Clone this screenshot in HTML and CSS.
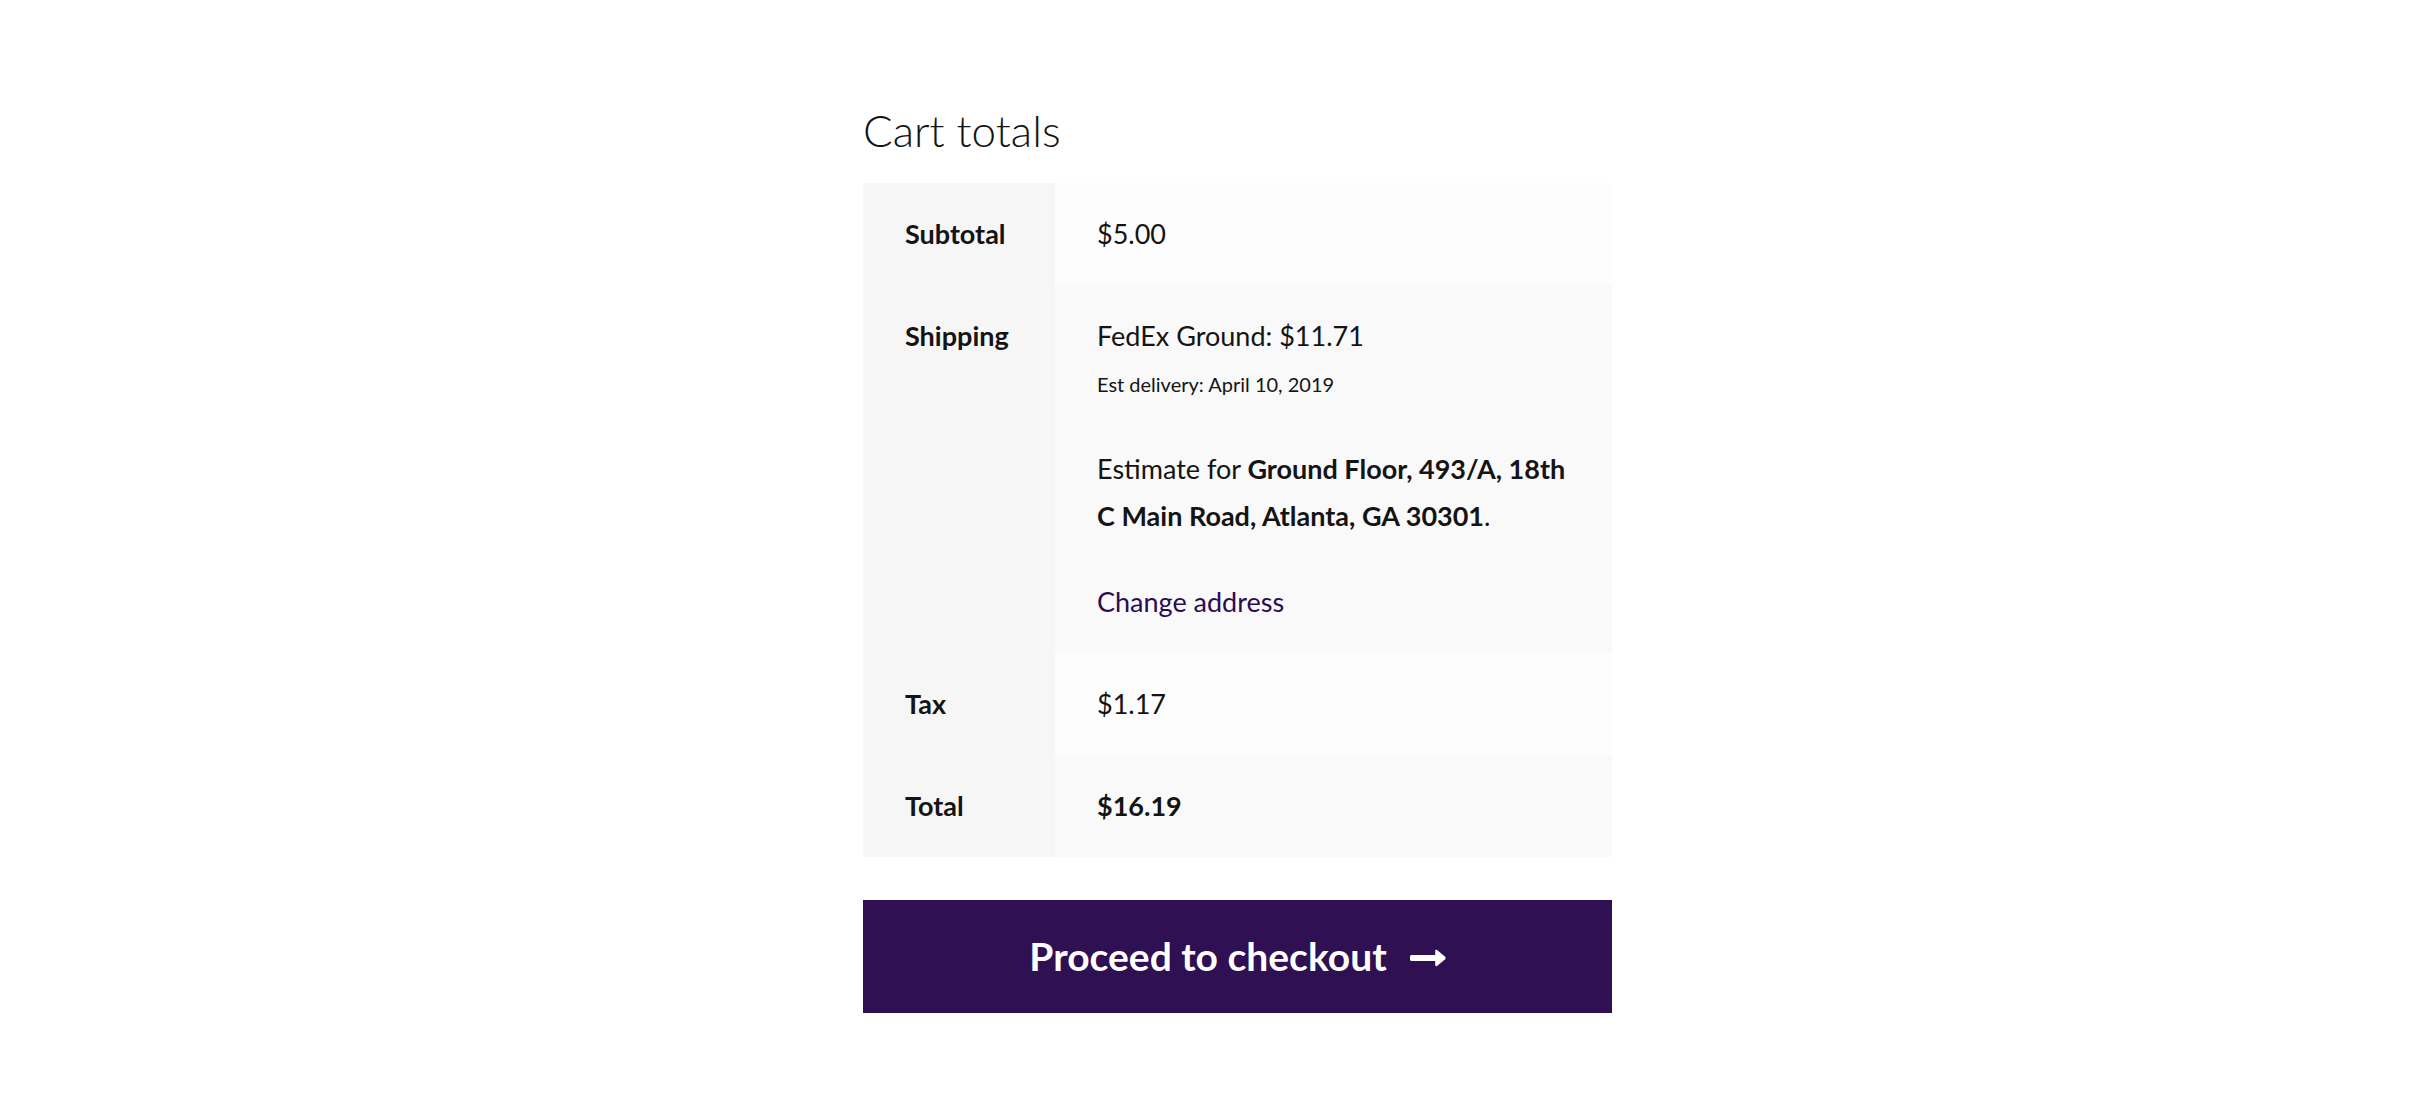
FILE: index.html
```html
<!DOCTYPE html>
<html lang="en">
<head>
<meta charset="utf-8">
<title>Cart totals</title>
<link rel="stylesheet" href="styles.css">
</head>
<body>
<div class="cart-collaterals">
  <div class="cart-totals">
    <h2 class="cart-title">Cart totals</h2>
    <table class="totals-table">
      <tbody>
        <tr class="row">
          <th>Subtotal</th>
          <td>$5.00</td>
        </tr>
        <tr class="row row-alt">
          <th>Shipping</th>
          <td>
            <div class="method">FedEx Ground: $11.71</div>
            <div class="delivery">Est delivery: April 10, 2019</div>
            <p class="destination">Estimate for <strong>Ground Floor, 493/A, 18th C Main Road, Atlanta, GA 30301</strong>.</p>
            <a class="change-address" href="#">Change address</a>
          </td>
        </tr>
        <tr class="row">
          <th>Tax</th>
          <td>$1.17</td>
        </tr>
        <tr class="row row-alt">
          <th>Total</th>
          <td><strong>$16.19</strong></td>
        </tr>
      </tbody>
    </table>
    <a class="checkout-button" href="#">
      <span class="checkout-label">Proceed to checkout</span>
      <svg class="checkout-arrow" width="36" height="18" viewBox="0 0 35 17" aria-hidden="true">
        <path d="M1.5 5.6 H24.5 V1.6 C24.5 0.6 25.5 0.2 26.3 0.8 L34.2 7.4 C34.8 7.9 34.8 9.1 34.2 9.6 L26.3 16.2 C25.5 16.8 24.5 16.4 24.5 15.4 V11.4 H1.5 C0.7 11.4 0 10.7 0 9.9 V7.1 C0 6.3 0.7 5.6 1.5 5.6 Z" fill="#ffffff"/>
      </svg>
    </a>
  </div>
</div>
</body>
</html>
```

FILE: styles.css
```css
html, body {
  margin: 0;
  padding: 0;
  background: #ffffff;
}

body {
  font-family: "Lato", "Noto Sans", "Liberation Sans", sans-serif;
  color: #141414;
  font-size: 27px;
  line-height: 47px;
}

.cart-collaterals {
  display: flex;
  justify-content: flex-start;
  padding: 104px 0 0 863px;
}

.cart-totals {
  width: 749px;
  display: flex;
  flex-direction: column;
}

.cart-title {
  margin: 0 0 27px 0;
  font-size: 44px;
  font-weight: 300;
  line-height: 52px;
  color: #141414;
}

.totals-table {
  width: 100%;
  border-collapse: collapse;
  border-spacing: 0;
}

.totals-table th,
.totals-table td {
  padding: 27px 42px 28px 42px;
  vertical-align: top;
  text-align: left;
}

.totals-table th {
  width: 108px;
  background: #f6f6f6;
  font-weight: 700;
}

.totals-table td {
  background: #fdfdfd;
  font-weight: 400;
}

.row-alt td {
  background: #f9f9f9;
}

.totals-table strong {
  font-weight: 700;
}

.method {
  line-height: 47px;
}

.delivery {
  margin-top: 9px;
  font-size: 20px;
  line-height: 32px;
}

.destination {
  margin: 45px 0 0 0;
  line-height: 47px;
}

.change-address {
  display: block;
  margin-top: 39px;
  color: #2b0c52;
  text-decoration: none;
  line-height: 47px;
}

.checkout-button {
  margin-top: 43px;
  height: 113px;
  background: #2f1052;
  color: #ffffff;
  text-decoration: none;
  display: flex;
  align-items: center;
  justify-content: center;
  gap: 23px;
}

.checkout-label {
  font-size: 39px;
  font-weight: 700;
  line-height: 1;
}

.checkout-arrow {
  display: block;
  margin-top: 2px;
}
```
